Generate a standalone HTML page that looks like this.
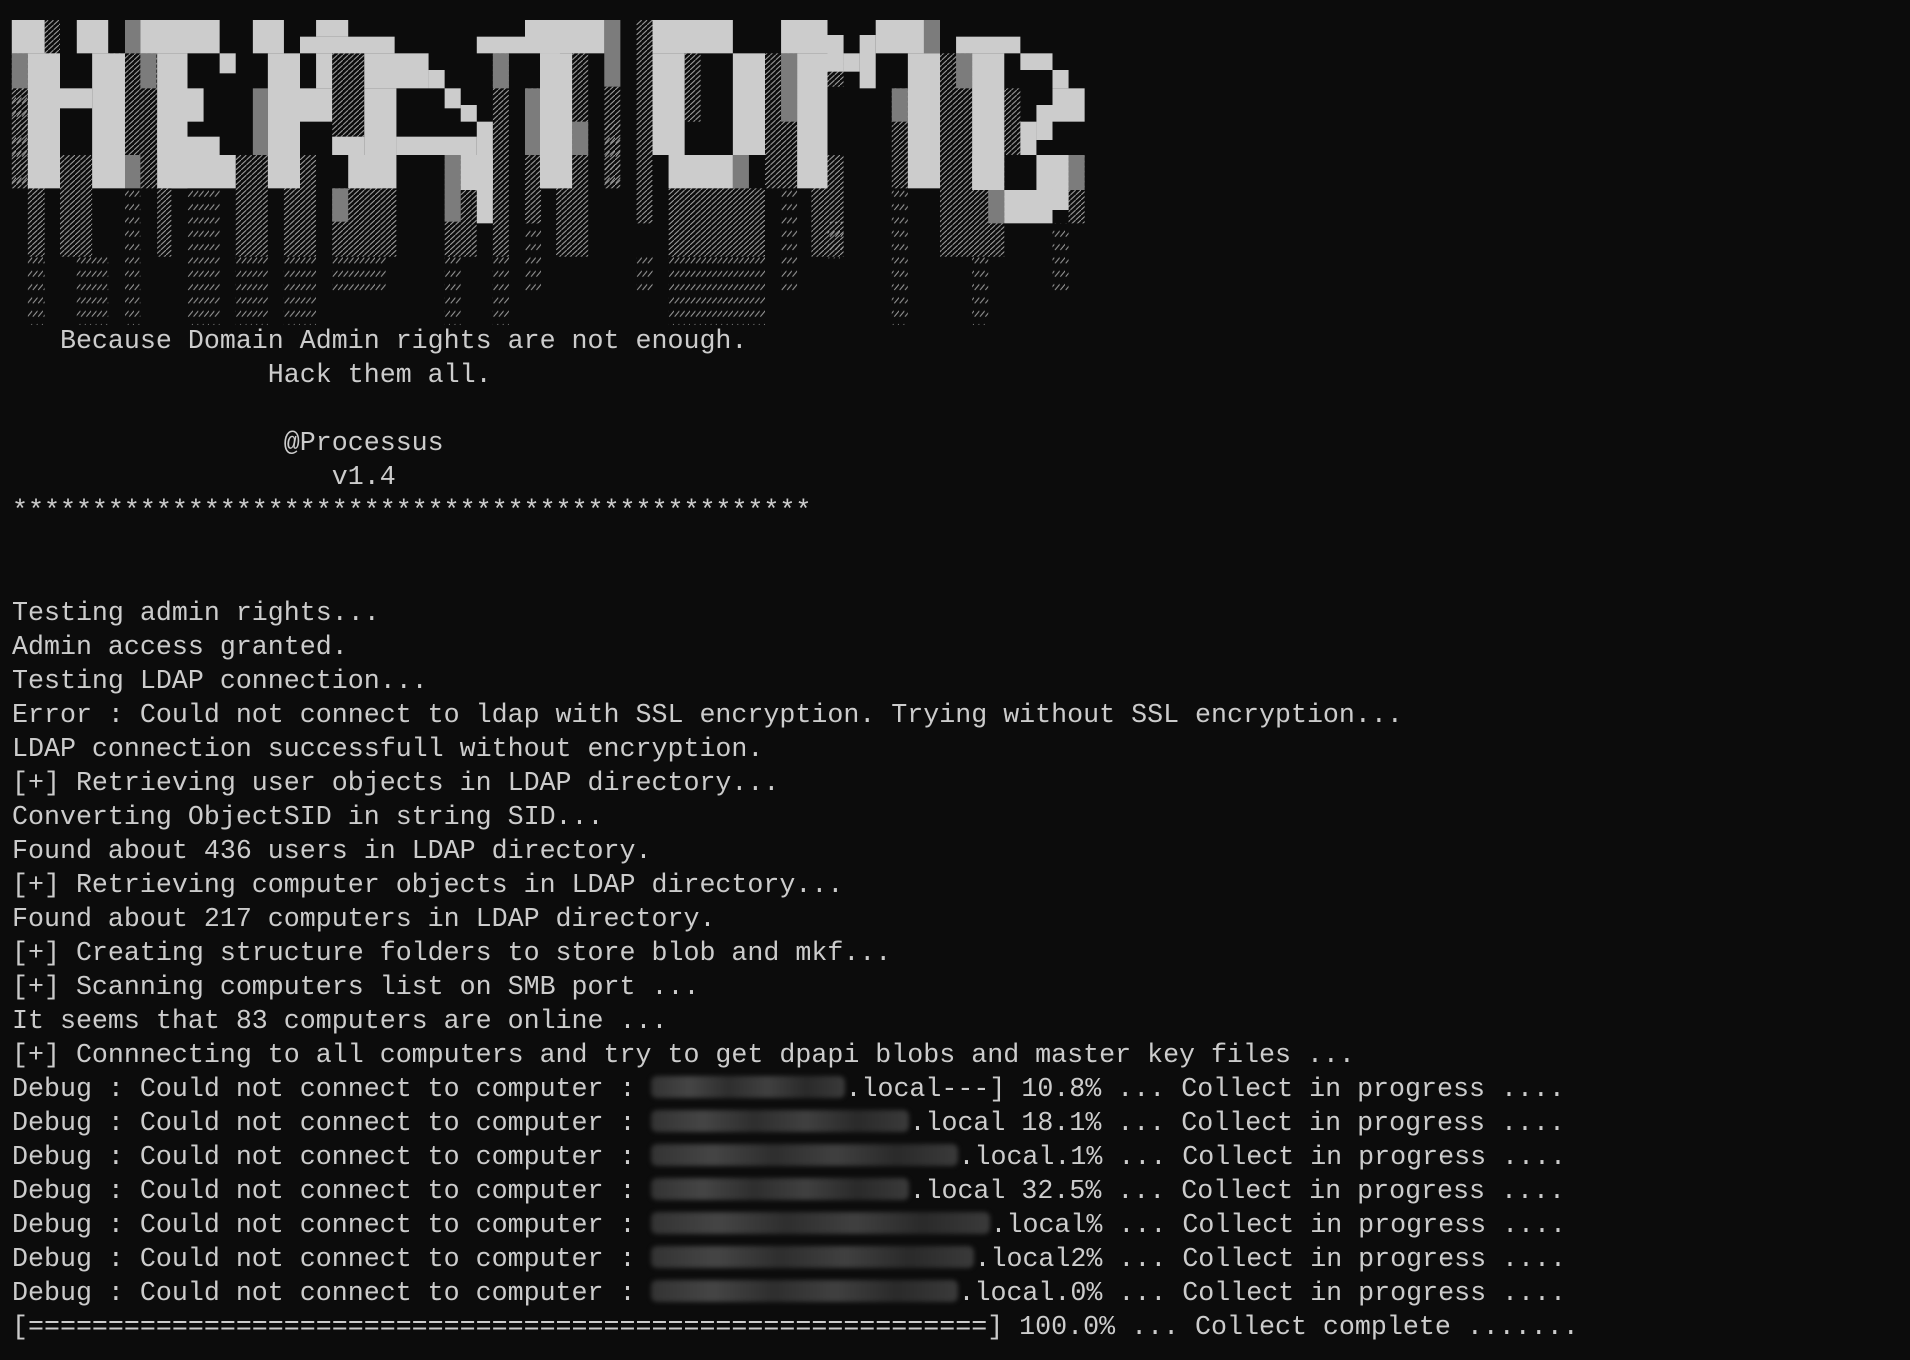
<!DOCTYPE html>
<html><head><meta charset="utf-8"><style>
html,body{margin:0;padding:0;background:#0c0c0c;width:1910px;height:1360px;overflow:hidden}
#t{position:absolute;left:12px;top:19px;margin:0;font-family:"Liberation Mono",monospace;font-size:26.65px;line-height:34px;color:#cccccc;white-space:pre}
.b{display:inline-block;height:22px;vertical-align:-2px;background:linear-gradient(90deg,#333 0%,#454545 20%,#2e2e2e 40%,#404040 60%,#2a2a2a 80%,#3a3a3a 100%);filter:blur(2.5px);border-radius:6px}
svg{position:absolute;left:0;top:0}
</style></head><body>
<svg width="1100" height="340" viewBox="0 0 1100 340">
<defs>
<pattern id="h" width="15" height="15" patternUnits="userSpaceOnUse"><path d="M-3,18 L18,-3" stroke="#a0a0a0" stroke-width="3"/></pattern>
<pattern id="s" width="15" height="40" patternUnits="userSpaceOnUse"><path d="M2,30 L16,12" stroke="#a0a0a0" stroke-width="3"/></pattern>
</defs>
<g transform="scale(0.35714,0.33333)">
<g fill="url(#h)">
<rect x="33" y="160" width="45" height="405"/><rect x="125" y="60" width="43" height="205"/>
<rect x="168" y="465" width="90" height="305"/><rect x="303" y="160" width="90" height="305"/>
<rect x="393" y="160" width="47" height="405"/><rect x="440" y="565" width="40" height="205"/>
<rect x="660" y="465" width="90" height="305"/><rect x="795" y="465" width="90" height="305"/>
<rect x="930" y="160" width="90" height="250"/><rect x="930" y="565" width="180" height="205"/>
<rect x="1245" y="465" width="90" height="305"/><rect x="1380" y="160" width="45" height="610"/>
<rect x="1470" y="265" width="45" height="405"/><rect x="78" y="565" width="47" height="205"/>
</g>
<g fill="url(#s)">
<rect x="78" y="770" width="47" height="205"/><rect x="215" y="770" width="88" height="205"/>
<rect x="350" y="565" width="43" height="410"/><rect x="525" y="565" width="90" height="410"/>
<rect x="660" y="770" width="90" height="205"/><rect x="795" y="770" width="90" height="205"/>
<rect x="930" y="770" width="150" height="110"/><rect x="1245" y="770" width="45" height="205"/>
<rect x="1380" y="770" width="45" height="205"/><rect x="1470" y="670" width="45" height="210"/>
<rect x="33" y="265" width="45" height="300"/>
</g>
<g fill="#7c7c7c">
<rect x="33" y="160" width="45" height="105"/><rect x="78" y="365" width="45" height="200"/>
<rect x="350" y="60" width="43" height="100"/><rect x="393" y="160" width="45" height="105"/>
<rect x="440" y="365" width="40" height="100"/><rect x="350" y="465" width="43" height="100"/>
<rect x="708" y="265" width="42" height="200"/><rect x="1020" y="465" width="45" height="100"/>
<rect x="930" y="565" width="45" height="100"/><rect x="1245" y="465" width="45" height="200"/>
<rect x="1380" y="160" width="45" height="105"/><rect x="1470" y="265" width="45" height="200"/>
</g>
<g fill="#cccccc">
<rect x="33" y="60" width="92" height="100"/><rect x="78" y="160" width="90" height="405"/>
<rect x="215" y="60" width="88" height="100"/><rect x="258" y="160" width="92" height="405"/>
<rect x="168" y="265" width="90" height="60"/>
<rect x="393" y="60" width="222" height="100"/><rect x="615" y="160" width="45" height="60"/>
<rect x="440" y="160" width="85" height="405"/><rect x="525" y="265" width="45" height="100"/>
<rect x="525" y="410" width="90" height="55"/><rect x="480" y="465" width="180" height="100"/>
<rect x="708" y="60" width="87" height="100"/><rect x="750" y="160" width="90" height="405"/>
<rect x="885" y="60" width="90" height="50"/><rect x="840" y="110" width="265" height="50"/>
<rect x="885" y="160" width="45" height="105"/><rect x="840" y="265" width="90" height="100"/>
<rect x="930" y="410" width="90" height="55"/><rect x="975" y="465" width="90" height="100"/>
<rect x="1020" y="160" width="180" height="105"/><rect x="1200" y="210" width="45" height="55"/>
<rect x="1245" y="265" width="45" height="60"/><rect x="1290" y="315" width="45" height="50"/>
<rect x="1335" y="365" width="45" height="305"/><rect x="1020" y="265" width="90" height="300"/>
<rect x="1110" y="410" width="225" height="55"/><rect x="1290" y="465" width="90" height="105"/>
<rect x="1335" y="110" width="135" height="50"/><rect x="1470" y="60" width="98" height="100"/>
<rect x="1515" y="160" width="53" height="405"/>
</g>
</g>
<g transform="translate(540,0) scale(0.35714,0.33333)">
<g fill="url(#h)">
<rect x="90" y="160" width="45" height="405"/><rect x="45" y="565" width="90" height="205"/>
<rect x="180" y="260" width="45" height="305"/><rect x="270" y="60" width="45" height="610"/>
<rect x="405" y="160" width="45" height="205"/><rect x="360" y="565" width="270" height="205"/>
<rect x="630" y="160" width="90" height="405"/><rect x="805" y="160" width="45" height="100"/>
<rect x="760" y="465" width="90" height="305"/><rect x="1120" y="160" width="90" height="305"/>
<rect x="1120" y="465" width="180" height="305"/><rect x="1300" y="265" width="45" height="200"/>
<rect x="1480" y="465" width="45" height="205"/><rect x="985" y="265" width="45" height="300"/>
</g>
<g fill="url(#s)">
<rect x="270" y="770" width="45" height="110"/>
<rect x="360" y="770" width="270" height="205"/><rect x="675" y="565" width="45" height="315"/>
<rect x="805" y="665" width="45" height="110"/><rect x="985" y="565" width="45" height="410"/>
<rect x="1210" y="770" width="45" height="205"/><rect x="1435" y="670" width="45" height="210"/>
<rect x="180" y="365" width="45" height="200"/>
</g>
<g fill="#7c7c7c">
<rect x="180" y="60" width="45" height="200"/><rect x="90" y="365" width="45" height="100"/>
<rect x="540" y="465" width="45" height="100"/><rect x="675" y="160" width="45" height="205"/>
<rect x="1075" y="60" width="45" height="100"/><rect x="1165" y="160" width="45" height="105"/>
<rect x="985" y="265" width="45" height="100"/><rect x="1210" y="465" width="45" height="100"/>
<rect x="1255" y="570" width="45" height="100"/><rect x="1480" y="465" width="45" height="105"/>
</g>
<g fill="#cccccc">
<rect x="0" y="60" width="180" height="100"/><rect x="0" y="160" width="90" height="405"/>
<rect x="315" y="60" width="225" height="100"/><rect x="315" y="160" width="90" height="305"/>
<rect x="360" y="465" width="180" height="100"/><rect x="540" y="160" width="90" height="305"/>
<rect x="675" y="60" width="130" height="100"/><rect x="720" y="160" width="85" height="405"/>
<rect x="805" y="105" width="45" height="110"/><rect x="850" y="160" width="45" height="55"/>
<rect x="895" y="105" width="45" height="160"/><rect x="940" y="60" width="135" height="100"/>
<rect x="1030" y="160" width="90" height="405"/>
<rect x="1165" y="110" width="180" height="50"/><rect x="1210" y="160" width="90" height="410"/>
<rect x="1345" y="160" width="90" height="50"/><rect x="1435" y="210" width="45" height="55"/>
<rect x="1435" y="265" width="90" height="100"/><rect x="1390" y="315" width="45" height="105"/>
<rect x="1345" y="365" width="45" height="100"/><rect x="1390" y="465" width="45" height="105"/>
<rect x="1435" y="465" width="45" height="165"/><rect x="1300" y="570" width="180" height="60"/>
<rect x="1300" y="630" width="135" height="40"/>
</g>
</g>
</svg>
<pre id="t">









   Because Domain Admin rights are not enough.
                Hack them all.

                 @Processus
                    v1.4
**************************************************


Testing admin rights...
Admin access granted.
Testing LDAP connection...
Error : Could not connect to ldap with SSL encryption. Trying without SSL encryption...
LDAP connection successfull without encryption.
[+] Retrieving user objects in LDAP directory...
Converting ObjectSID in string SID...
Found about 436 users in LDAP directory.
[+] Retrieving computer objects in LDAP directory...
Found about 217 computers in LDAP directory.
[+] Creating structure folders to store blob and mkf...
[+] Scanning computers list on SMB port ...
It seems that 83 computers are online ...
[+] Connnecting to all computers and try to get dpapi blobs and master key files ...
Debug : Could not connect to computer : <span class="b" style="width:194px"></span>.local---] 10.8% ... Collect in progress ....
Debug : Could not connect to computer : <span class="b" style="width:258px"></span>.local 18.1% ... Collect in progress ....
Debug : Could not connect to computer : <span class="b" style="width:307px"></span>.local.1% ... Collect in progress ....
Debug : Could not connect to computer : <span class="b" style="width:258px"></span>.local 32.5% ... Collect in progress ....
Debug : Could not connect to computer : <span class="b" style="width:339px"></span>.local% ... Collect in progress ....
Debug : Could not connect to computer : <span class="b" style="width:323px"></span>.local2% ... Collect in progress ....
Debug : Could not connect to computer : <span class="b" style="width:307px"></span>.local.0% ... Collect in progress ....
[============================================================] 100.0% ... Collect complete .......</pre>
</body></html>
